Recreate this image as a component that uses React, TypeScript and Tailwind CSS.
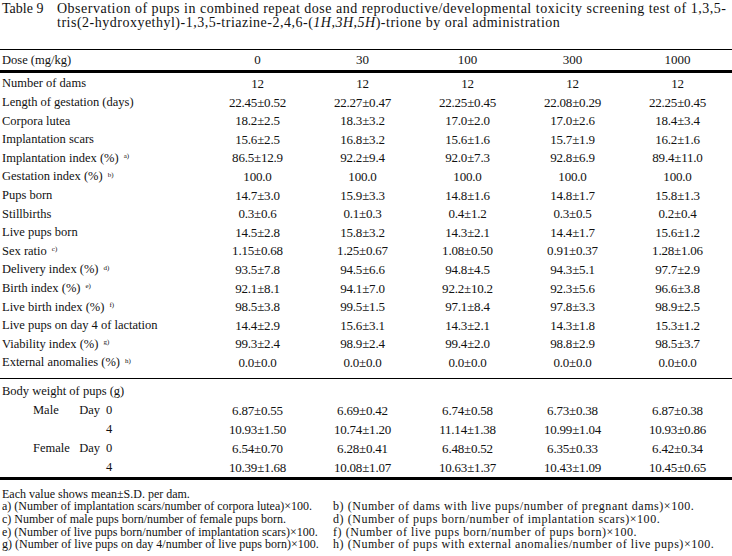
import React from "react";

type Row = { label: string; note?: string; values: string[] };

const rows: Row[] = [
  { label: "Number of dams", values: ["12", "12", "12", "12", "12"] },
  { label: "Length of gestation (days)", values: ["22.45±0.52", "22.27±0.47", "22.25±0.45", "22.08±0.29", "22.25±0.45"] },
  { label: "Corpora lutea", values: ["18.2±2.5", "18.3±3.2", "17.0±2.0", "17.0±2.6", "18.4±3.4"] },
  { label: "Implantation scars", values: ["15.6±2.5", "16.8±3.2", "15.6±1.6", "15.7±1.9", "16.2±1.6"] },
  { label: "Implantation index (%)", note: "a)", values: ["86.5±12.9", "92.2±9.4", "92.0±7.3", "92.8±6.9", "89.4±11.0"] },
  { label: "Gestation index (%)", note: "b)", values: ["100.0", "100.0", "100.0", "100.0", "100.0"] },
  { label: "Pups born", values: ["14.7±3.0", "15.9±3.3", "14.8±1.6", "14.8±1.7", "15.8±1.3"] },
  { label: "Stillbirths", values: ["0.3±0.6", "0.1±0.3", "0.4±1.2", "0.3±0.5", "0.2±0.4"] },
  { label: "Live pups born", values: ["14.5±2.8", "15.8±3.2", "14.3±2.1", "14.4±1.7", "15.6±1.2"] },
  { label: "Sex ratio", note: "c)", values: ["1.15±0.68", "1.25±0.67", "1.08±0.50", "0.91±0.37", "1.28±1.06"] },
  { label: "Delivery index (%)", note: "d)", values: ["93.5±7.8", "94.5±6.6", "94.8±4.5", "94.3±5.1", "97.7±2.9"] },
  { label: "Birth index (%)", note: "e)", values: ["92.1±8.1", "94.1±7.0", "92.2±10.2", "92.3±5.6", "96.6±3.8"] },
  { label: "Live birth index (%)", note: "f)", values: ["98.5±3.8", "99.5±1.5", "97.1±8.4", "97.8±3.3", "98.9±2.5"] },
  { label: "Live pups on day 4 of lactation", values: ["14.4±2.9", "15.6±3.1", "14.3±2.1", "14.3±1.8", "15.3±1.2"] },
  { label: "Viability index (%)", note: "g)", values: ["99.3±2.4", "98.9±2.4", "99.4±2.0", "98.8±2.9", "98.5±3.7"] },
  { label: "External anomalies (%)", note: "h)", values: ["0.0±0.0", "0.0±0.0", "0.0±0.0", "0.0±0.0", "0.0±0.0"] },
];

const weights = [
  { sex: "Male", day: "0", values: ["6.87±0.55", "6.69±0.42", "6.74±0.58", "6.73±0.38", "6.87±0.38"] },
  { sex: "", day: "4", values: ["10.93±1.50", "10.74±1.20", "11.14±1.38", "10.99±1.04", "10.93±0.86"] },
  { sex: "Female", day: "0", values: ["6.54±0.70", "6.28±0.41", "6.48±0.52", "6.35±0.33", "6.42±0.34"] },
  { sex: "", day: "4", values: ["10.39±1.68", "10.08±1.07", "10.63±1.37", "10.43±1.09", "10.45±0.65"] },
];

const notes = [
  ["a) (Number of implantation scars/number of corpora lutea)×100.", "b) (Number of dams with live pups/number of pregnant dams)×100."],
  ["c) Number of male pups born/number of female pups born.", "d) (Number of pups born/number of implantation scars)×100."],
  ["e) (Number of live pups born/number of implantation scars)×100.", "f) (Number of live pups born/number of pups born)×100."],
  ["g) (Number of live pups on day 4/number of live pups born)×100.", "h) (Number of pups with external anomalies/number of live pups)×100."],
];

const Values = ({ values }: { values: string[] }) => (
  <>
    {values.map((v, i) => (
      <div key={i} className="text-center text-[13px] tracking-[-0.2px]">
        {v}
      </div>
    ))}
  </>
);

export default function App() {
  return (
    <div className="w-[732px] h-[556px] bg-white text-[#111] overflow-hidden font-['Liberation_Serif',serif]">
      {/* Title */}
      <div className="flex text-[14px] leading-[14px] pt-[2px] pl-[2px] whitespace-nowrap">
        <span className="w-[55px] shrink-0">Table 9</span>
        <div>
          <div className="tracking-[0.5px]">
            Observation of pups in combined repeat dose and reproductive/developmental toxicity screening test of 1,3,5-
          </div>
          <div className="tracking-[0.5px]">
            tris(2-hydroxyethyl)-1,3,5-triazine-2,4,6-(<i>1H</i>,<i>3H</i>,<i>5H</i>)-trione by oral administration
          </div>
        </div>
      </div>

      {/* Table */}
      <div className="mt-[19px] border-t-[1.5px] border-black">
        <div className="grid grid-cols-[205px_105px_105px_105px_105px_105px] h-[23px] items-center text-[12.5px] border-b-[3px] border-black">
          <div className="pl-[2px]">Dose (mg/kg)</div>
          {["0", "30", "100", "300", "1000"].map((d) => (
            <div key={d} className="text-center text-[13px]">{d}</div>
          ))}
        </div>

        <div className="pt-[1px] pb-[6px] border-b-[1.5px] border-black">
          {rows.map((r) => (
            <div key={r.label} className="grid grid-cols-[205px_105px_105px_105px_105px_105px] h-[18.6px] items-center">
              <div className="pl-[2px] text-[12.5px] whitespace-nowrap">
                {r.label}
                {r.note && <sup className="ml-[5px] text-[7px]">{r.note}</sup>}
              </div>
              <Values values={r.values} />
            </div>
          ))}
        </div>

        <div className="pt-[3px] border-b-[3px] border-black">
          <div className="h-[19px] flex items-center pl-[2px] text-[12.5px]">Body weight of pups (g)</div>
          {weights.map((w, i) => (
            <div key={i} className="grid grid-cols-[205px_105px_105px_105px_105px_105px] h-[19px] items-center">
              <div className="flex items-center pl-[33px] text-[12.5px]">
                <div className="w-[67px] flex justify-between">
                  <span>{w.sex}</span>
                  <span>{w.sex ? "Day" : ""}</span>
                </div>
                <span className="ml-[6px]">{w.day}</span>
              </div>
              <Values values={w.values} />
            </div>
          ))}
        </div>
      </div>

      {/* Footnotes */}
      <div className="pt-[8px] pl-[2px] text-[12px] leading-[12.7px] whitespace-nowrap">
        <div>Each value shows mean±S.D. per dam.</div>
        {notes.map(([a, b]) => (
          <div key={a} className="grid grid-cols-[331px_1fr]">
            <span>{a}</span>
            <span className="tracking-[0.55px]">{b}</span>
          </div>
        ))}
      </div>
    </div>
  );
}
